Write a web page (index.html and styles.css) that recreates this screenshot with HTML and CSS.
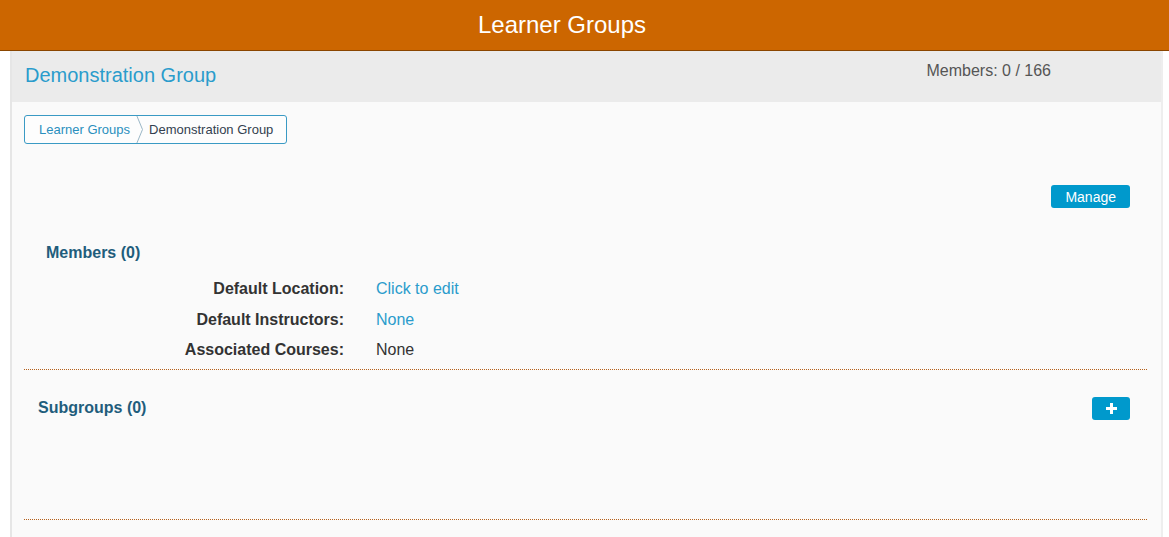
FILE: index.html
```html
<!DOCTYPE html>
<html>
<head>
<meta charset="utf-8">
<link rel="stylesheet" href="styles.css">
</head>
<body>
<header class="topbar"><h1 class="topbar-title">Learner Groups</h1></header>
<main class="panel">
  <div class="panel-head">
    <h2 class="group-title">Demonstration Group</h2>
    <div class="member-count">Members: 0 / 166</div>
  </div>
  <div class="panel-body">
    <nav class="crumbs">
      <a class="crumb crumb-link">Learner Groups</a>
      <span class="crumb-sep"><svg width="8" height="29" viewBox="0 0 8 29"><path d="M0.5 0 L6.5 14.5 L0.5 29" fill="none" stroke="#9ab6c6" stroke-width="1"/></svg></span>
      <span class="crumb crumb-current">Demonstration Group</span>
    </nav>
    <div class="actions"><button class="btn">Manage</button></div>
    <section class="members">
      <h3 class="section-title members-title">Members (0)</h3>
      <dl class="props">
        <div class="prop"><dt>Default Location:</dt><dd class="link">Click to edit</dd></div>
        <div class="prop"><dt>Default Instructors:</dt><dd class="link">None</dd></div>
        <div class="prop"><dt>Associated Courses:</dt><dd>None</dd></div>
      </dl>
    </section>
    <section class="subgroups">
      <h3 class="section-title">Subgroups (0)</h3>
      <button class="btn btn-plus"><svg width="11" height="11" viewBox="0 0 11 11"><path d="M4 0h3v4h4v3H7v4H4V7H0V4h4z" fill="#fff"/></svg></button>
    </section>
  </div>
</main>
</body>
</html>
```
FILE: styles.css
```css
* { box-sizing: border-box; }
html, body { margin: 0; padding: 0; background: #fff; }
body { font-family: "Liberation Sans", Arial, sans-serif; color: #333; }

.topbar {
  height: 51px;
  background: #cc6600;
  border-bottom: 1px solid #8a4600;
  display: flex;
  align-items: center;
  justify-content: center;
  padding-right: 45px;
}
.topbar-title {
  margin: 0;
  font-size: 24px;
  font-weight: normal;
  color: #fff;
}

.panel {
  margin-left: 10px;
  width: 1153px;
  border-left: 2px solid #e6e6e6;
  border-right: 2px solid #eeeeee;
  background: #fafafa;
  min-height: 486px;
}
.panel-head {
  height: 51px;
  background: #ebebeb;
  display: flex;
  justify-content: space-between;
  align-items: flex-start;
  padding: 0 110px 0 13px;
}
.group-title {
  margin: 0;
  font-size: 20px;
  font-weight: normal;
  color: #2a9ccc;
  line-height: 24px;
  padding-top: 12px;
}
.member-count {
  font-size: 16px;
  color: #555;
  line-height: 18px;
  padding-top: 11px;
}

.panel-body { padding: 13px 14px 0 12px; }

.crumbs {
  display: inline-flex;
  align-items: center;
  height: 29px;
  border: 1px solid #3a9ac4;
  border-radius: 3px;
  font-size: 13px;
  background: #fdfdfd;
}
.crumb { padding: 0 6px 0 14px; }
.crumb-link { color: #2a8fbd; }
.crumb-current { color: #333f4f; padding: 0 13px 0 5px; }
.crumb-sep { display: flex; height: 27px; overflow: hidden; }
.crumb-sep svg { margin-top: -1px; }

.actions {
  display: flex;
  justify-content: flex-end;
  padding: 41px 17px 0 0;
}
.btn {
  border: 0;
  border-radius: 3px;
  background: #0099cc;
  color: #fff;
  font-family: "Liberation Sans", Arial, sans-serif;
  font-size: 14px;
  height: 23px;
  padding: 0 14px;
  cursor: pointer;
}

.section-title {
  margin: 0;
  font-size: 16px;
  font-weight: bold;
  color: #1f5d7c;
  line-height: 18px;
}
.members { border-bottom: 1px dotted #b5601a; padding-bottom: 3px; }
.members-title { padding: 36px 0 0 22px; }

.props { margin: 12px 0 0 0; }
.prop {
  display: flex;
  height: 30.5px;
  align-items: center;
  font-size: 16px;
}
.prop dt {
  width: 320px;
  text-align: right;
  font-weight: bold;
  color: #333;
}
.prop dd { margin: 0 0 0 32px; color: #333; }
.prop dd.link { color: #2a9ccc; }

.subgroups {
  display: flex;
  justify-content: space-between;
  align-items: flex-start;
  height: 150px;
  padding: 27px 17px 0 14px;
  border-bottom: 1px dotted #b5601a;
}
.subgroups .section-title { padding-top: 2px; }
.btn-plus {
  width: 38px;
  padding: 0;
  display: flex;
  align-items: center;
  justify-content: center;
}
```
